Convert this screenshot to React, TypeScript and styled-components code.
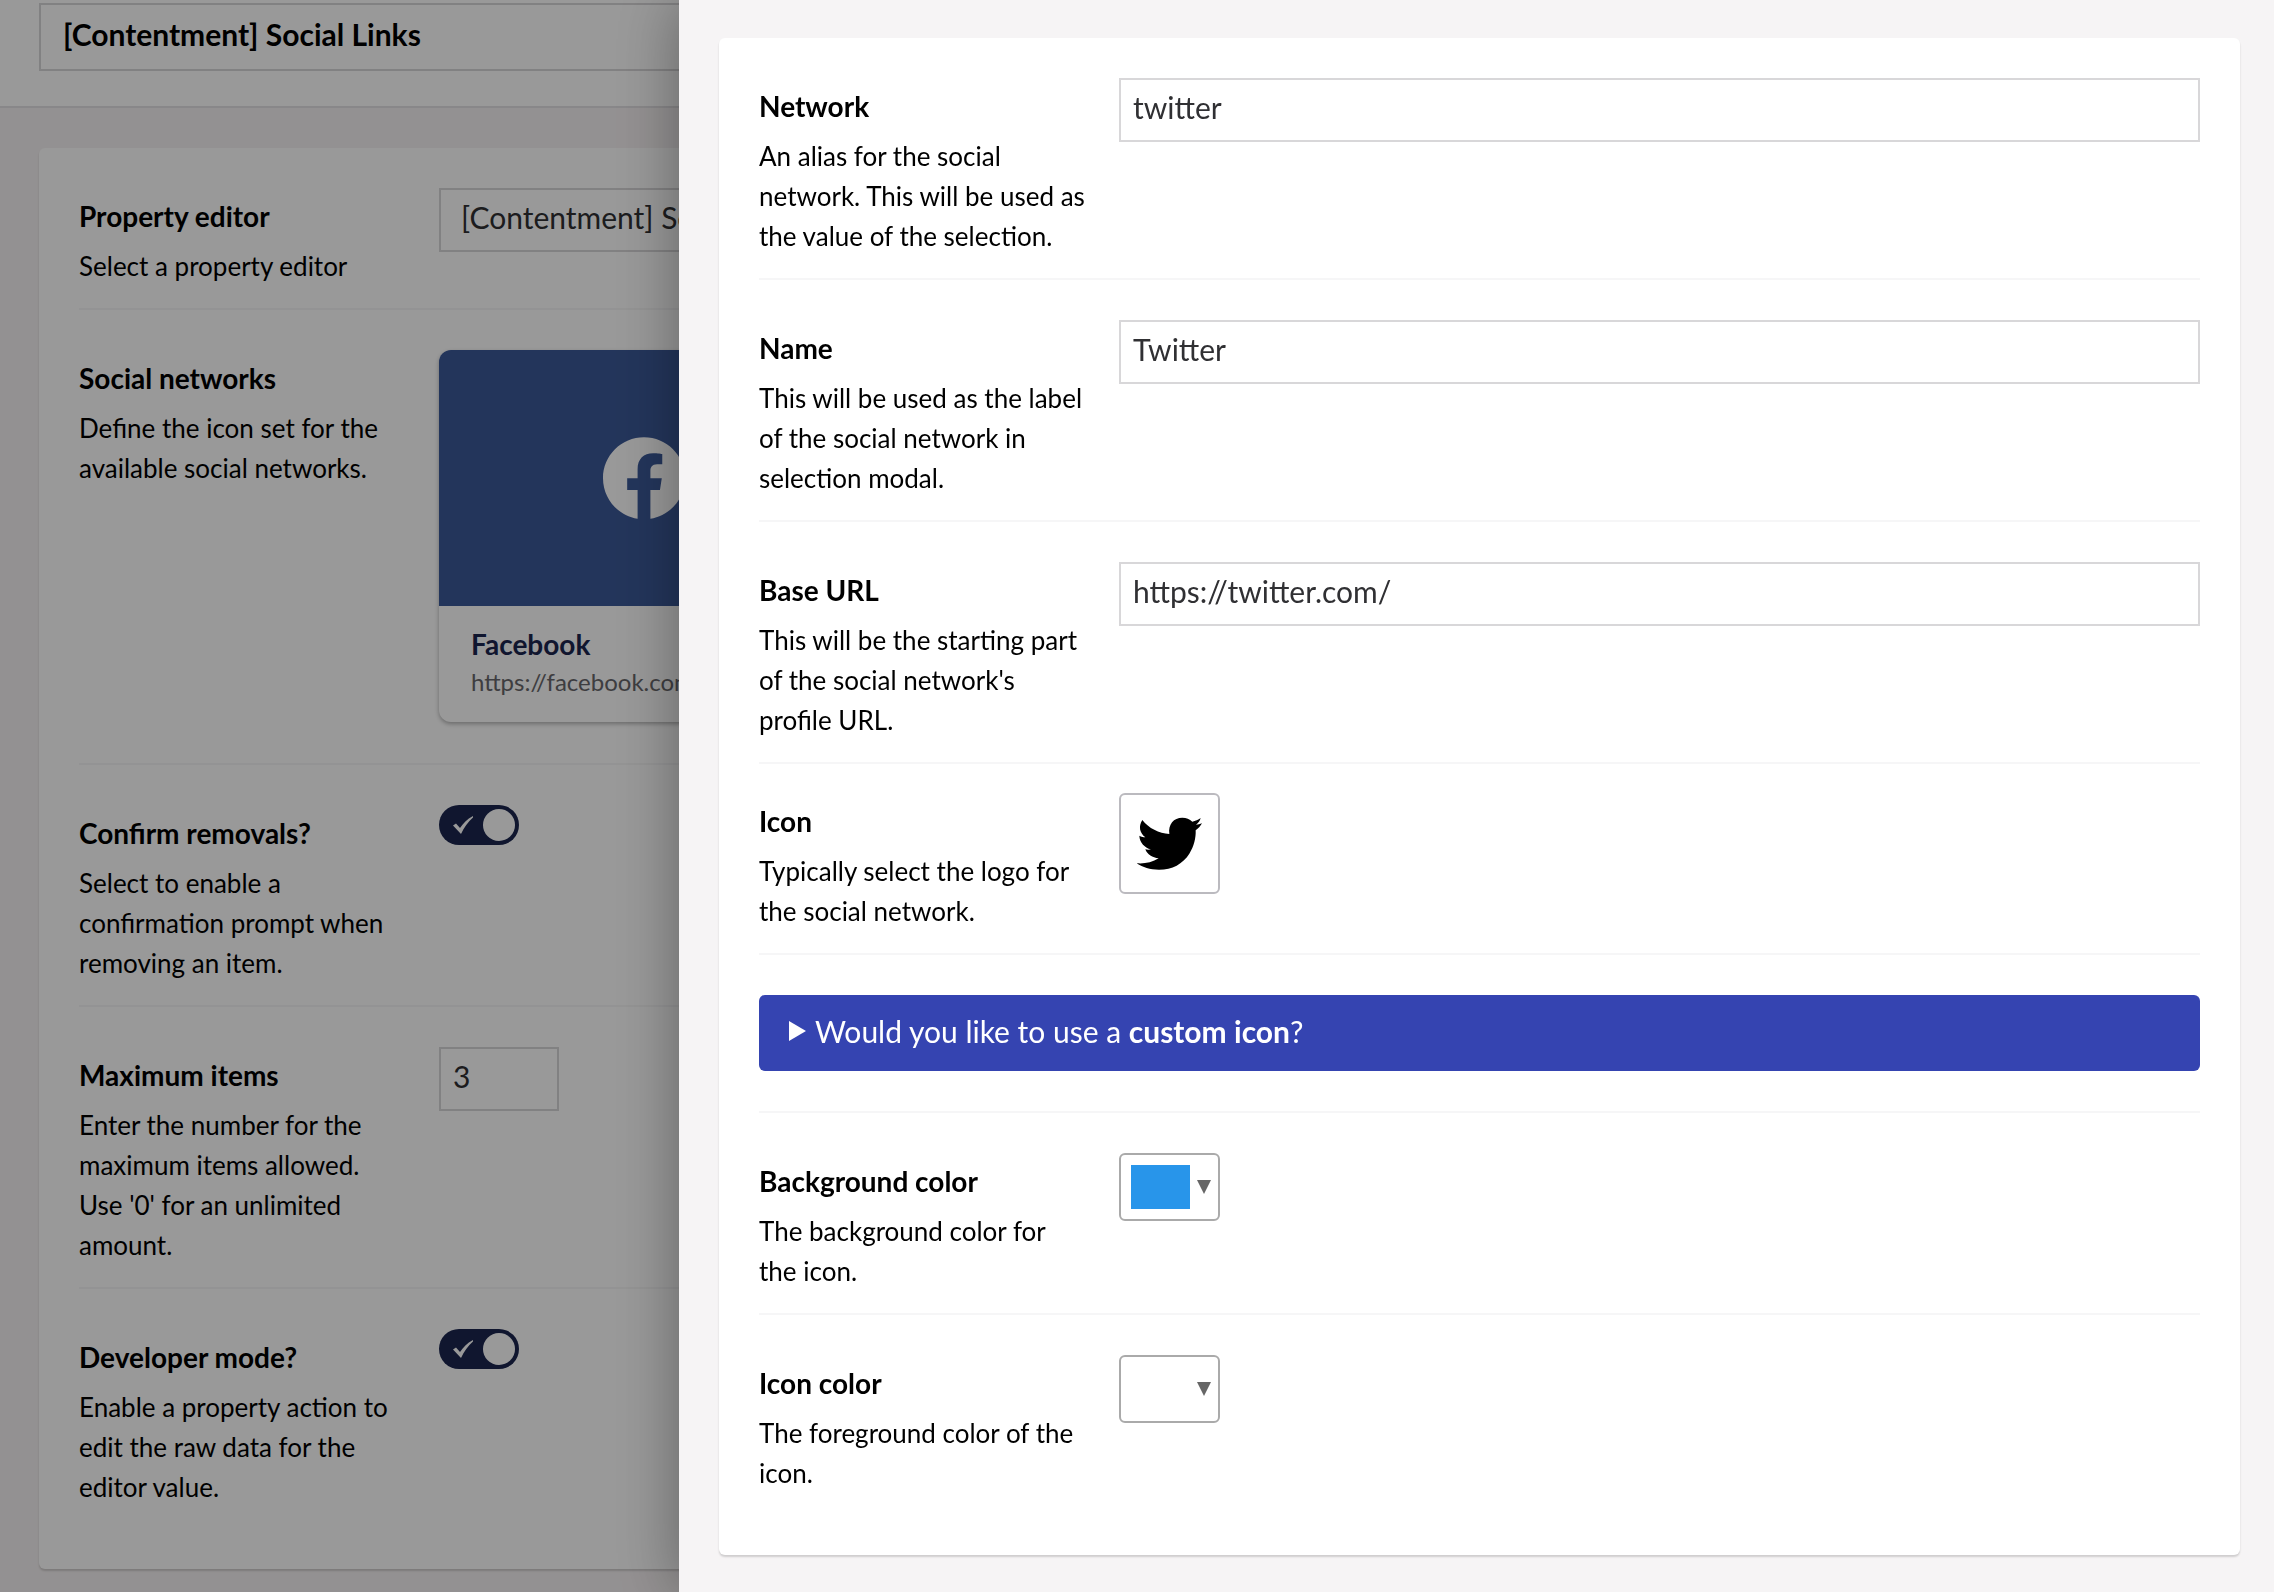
import React, { useId, useState } from 'react';
import styled, { createGlobalStyle } from 'styled-components';

const GlobalStyle = createGlobalStyle`
  *, *::before, *::after { box-sizing: border-box; }
  body {
    margin: 0;
    background: #f6f2f3;
    color: #000;
    font-family: Lato, "Open Sans", sans-serif;
    font-size: 30px;
    line-height: 40px;
  }
  button, input, select { font: inherit; }
`;

/* ---------- page behind the drawer ---------- */

const Page = styled.div`
  display: flex;
  flex-direction: column;
  min-height: 100vh;
  overflow: hidden;
`;

const PageHeader = styled.header`
  padding: 3px 40px 35px 39px;
  background: #fff;
  border-bottom: 2px solid #e3e1e4;
`;

const TitleInput = styled.input`
  display: block;
  width: 100%;
  height: 68px;
  padding: 0 22px 6px;
  border: 2px solid #d8d7d9;
  background: #fff;
  color: #000;
  font-weight: 700;
`;

const PageBody = styled.main`
  padding: 40px 40px 22px 39px;
`;

const Panel = styled.section`
  padding: 40px;
  border-radius: 6px;
  background: #fff;
  box-shadow: 0 2px 2px rgba(0, 0, 0, 0.16);
`;

const Backdrop = styled.div`
  position: fixed;
  inset: 0;
  background: rgba(0, 0, 0, 0.4);
`;

const Drawer = styled.aside`
  position: fixed;
  inset: 0 0 0 679px;
  padding: 38px 34px 38px 40px;
  background: #f6f4f5;
  box-shadow: 0 0 60px rgba(0, 0, 0, 0.36);
`;

/* ---------- property rows ---------- */

const Row = styled.div<{ $tight?: boolean }>`
  display: grid;
  grid-template-columns: 326px minmax(0, 1fr);
  column-gap: 34px;
  align-items: start;
  margin-bottom: ${(p) => (p.$tight ? 29 : 40)}px;
  border-bottom: 2px solid #f6f6f7;

  &:last-child {
    margin-bottom: 0;
    border-bottom: 0;
  }
`;

const FullRow = styled.div`
  margin-bottom: 40px;
  padding-bottom: 40px;
  border-bottom: 2px solid #f6f6f7;
`;

const RowHeader = styled.div`
  padding: 8px 0 22px;
`;

const RowLabel = styled.label`
  display: block;
  margin-bottom: 10px;
  font-size: 28px;
  font-weight: 700;
`;

const Description = styled.p`
  margin: 0;
  font-size: 26px;
`;

const TextInput = styled.input<{ $narrow?: boolean }>`
  display: block;
  width: ${(p) => (p.$narrow ? '120px' : '100%')};
  height: 64px;
  padding: 0 12px 6px;
  border: 2px solid #d8d7d9;
  border-radius: 0;
  background: #fff;
  color: #303033;
`;

const Select = styled.select`
  display: block;
  appearance: none;
  width: 100%;
  height: 64px;
  padding: 0 20px 6px;
  border: 2px solid #d8d7d9;
  border-radius: 0;
  background: #fff;
  color: #303033;
`;

/* ---------- toggle ---------- */

const ToggleBox = styled.span`
  position: relative;
  display: block;
  width: 80px;
  height: 40px;
`;

const ToggleInput = styled.input`
  appearance: none;
  display: flex;
  align-items: center;
  width: 100%;
  height: 100%;
  margin: 0;
  padding: 4px;
  border-radius: 20px;
  background: #bbbabf;

  &::before {
    content: '';
    width: 32px;
    height: 32px;
    border-radius: 50%;
    background: #fff;
  }

  &:checked {
    justify-content: flex-end;
    background: #1b264f;
  }
`;

const ToggleCheck = styled.svg`
  position: absolute;
  top: 11px;
  left: 14px;
  width: 20px;
  height: 18px;
  fill: #fff;
  pointer-events: none;
`;

/* ---------- network card ---------- */

const NetworkCard = styled.article`
  width: 410px;
  margin-bottom: 41px;
  overflow: hidden;
  border-radius: 12px;
  background: #fff;
  box-shadow: 0 2px 4px rgba(0, 0, 0, 0.3);
`;

const CardArt = styled.div`
  display: flex;
  align-items: center;
  justify-content: center;
  height: 256px;
  background: #3b5998;
`;

const CardText = styled.div`
  padding: 18px 32px 22px;
`;

const CardTitle = styled.h3`
  margin: 0;
  color: #1b264f;
  font-size: 28px;
  font-weight: 700;
`;

const CardUrl = styled.p`
  margin: 0;
  color: #68676b;
  font-size: 24px;
  line-height: 36px;
`;

/* ---------- icon and colour pickers ---------- */

const IconButton = styled.button`
  display: block;
  width: 101px;
  height: 101px;
  padding: 0;
  border: 2px solid #bbbabf;
  border-radius: 6px;
  background: #fff;

  svg { display: block; }
`;

const ColorButton = styled.button`
  display: flex;
  align-items: center;
  justify-content: space-between;
  width: 101px;
  height: 68px;
  padding: 0 7px 0 10px;
  border: 2px solid #aaa;
  border-radius: 6px;
  background: #fff;
`;

const Swatch = styled.span<{ $color: string }>`
  width: 59px;
  height: 44px;
  background: ${(p) => p.$color};
`;

const Details = styled.details`
  border-radius: 6px;
  background: #3544b1;
  color: #fff;
`;

const Summary = styled.summary`
  display: flex;
  align-items: center;
  gap: 9px;
  padding: 16px 30px 20px;
`;

/* ---------- drawings ---------- */

const FacebookLogo = () => (
  <svg width="82" height="82" viewBox="0 0 24 24" fill="#fff" aria-hidden="true">
    <path d="M24 12.073c0-6.627-5.373-12-12-12s-12 5.373-12 12c0 5.99 4.388 10.954 10.125 11.854v-8.385H7.078v-3.47h3.047V9.43c0-3.007 1.792-4.669 4.533-4.669 1.312 0 2.686.235 2.686.235v2.953H15.83c-1.491 0-1.956.925-1.956 1.874v2.25h3.328l-.532 3.47h-2.796v8.385C19.612 23.027 24 18.062 24 12.073z" />
  </svg>
);

const TwitterLogo = () => (
  <svg width="97" height="97" viewBox="33 43 291 291" aria-hidden="true">
    <path d="M97 118C116 143 147 158 178 160C174 131 191 111 217 111C229 111 239 115 247 123C256 121 265 117 272 112C270 120 265 127 258 132C264 132 270 130 276 128C271 137 265 143 257 149C258 172 252 197 238 219C218 250 187 267 147 267C119 267 99 260 80 248C102 250 126 246 146 233C127 231 112 222 106 206C112 208 117 208 123 206C103 201 89 185 88 165C94 168 100 170 106 170C90 158 84 138 97 118Z" />
  </svg>
);

const DownArrow = () => (
  <svg width="14" height="14" viewBox="0 0 14 14" fill="#666" aria-hidden="true">
    <path d="M0 0H14L7 14Z" />
  </svg>
);

const RightArrow = () => (
  <svg width="17" height="20" viewBox="0 0 17 20" fill="currentColor" aria-hidden="true">
    <path d="M0 0L17 10L0 20Z" />
  </svg>
);

/* ---------- composed parts ---------- */

type PropertyProps = {
  label: string;
  description: string;
  tight?: boolean;
  children: (id: string) => React.ReactNode;
};

function Property({ label, description, tight, children }: PropertyProps) {
  const id = useId();
  return (
    <Row $tight={tight}>
      <RowHeader>
        <RowLabel htmlFor={id}>{label}</RowLabel>
        <Description>{description}</Description>
      </RowHeader>
      {children(id)}
    </Row>
  );
}

function Toggle({ id }: { id: string }) {
  const [on, setOn] = useState(true);
  return (
    <ToggleBox>
      <ToggleInput id={id} type="checkbox" checked={on} onChange={() => setOn(!on)} />
      {on && (
        <ToggleCheck viewBox="0 0 20 18" aria-hidden="true">
          <path d="M0 9.500L3 7.500L7 12C10 7.500 14 3 20 0L20 1.500C15 6 11 11.500 8 18Z" />
        </ToggleCheck>
      )}
    </ToggleBox>
  );
}

function ColorPicker({ id, color }: { id: string; color: string }) {
  return (
    <ColorButton id={id} type="button">
      <Swatch $color={color} />
      <DownArrow />
    </ColorButton>
  );
}

export default function App() {
  return (
    <>
      <GlobalStyle />
      <Page>
        <PageHeader>
          <TitleInput aria-label="Data type name" defaultValue="[Contentment] Social Links" />
        </PageHeader>
        <PageBody>
          <Panel>
            <Property label="Property editor" description="Select a property editor">
              {(id) => (
                <Select id={id}>
                  <option>[Contentment] Social Links</option>
                </Select>
              )}
            </Property>
            <Property
              label="Social networks"
              description="Define the icon set for the available social networks."
            >
              {(id) => (
                <NetworkCard id={id}>
                  <CardArt>
                    <FacebookLogo />
                  </CardArt>
                  <CardText>
                    <CardTitle>Facebook</CardTitle>
                    <CardUrl>https://facebook.com/</CardUrl>
                  </CardText>
                </NetworkCard>
              )}
            </Property>
            <Property
              label="Confirm removals?"
              description="Select to enable a confirmation prompt when removing an item."
            >
              {(id) => <Toggle id={id} />}
            </Property>
            <Property
              label="Maximum items"
              description="Enter the number for the maximum items allowed. Use '0' for an unlimited amount."
            >
              {(id) => <TextInput id={id} $narrow inputMode="numeric" defaultValue="3" />}
            </Property>
            <Property
              label="Developer mode?"
              description="Enable a property action to edit the raw data for the editor value."
            >
              {(id) => <Toggle id={id} />}
            </Property>
          </Panel>
        </PageBody>
      </Page>

      <Backdrop />

      <Drawer>
        <Panel>
          <Property
            label="Network"
            description="An alias for the social network. This will be used as the value of the selection."
          >
            {(id) => <TextInput id={id} defaultValue="twitter" />}
          </Property>
          <Property
            label="Name"
            description="This will be used as the label of the social network in selection modal."
          >
            {(id) => <TextInput id={id} defaultValue="Twitter" />}
          </Property>
          <Property
            label="Base URL"
            description="This will be the starting part of the social network's profile URL."
            tight
          >
            {(id) => <TextInput id={id} defaultValue="https://twitter.com/" />}
          </Property>
          <Property label="Icon" description="Typically select the logo for the social network.">
            {(id) => (
              <IconButton id={id} type="button">
                <TwitterLogo />
              </IconButton>
            )}
          </Property>
          <FullRow>
            <Details>
              <Summary>
                <RightArrow />
                <span>
                  Would you like to use a <strong>custom icon</strong>?
                </span>
              </Summary>
            </Details>
          </FullRow>
          <Property label="Background color" description="The background color for the icon.">
            {(id) => <ColorPicker id={id} color="#2895ea" />}
          </Property>
          <Property label="Icon color" description="The foreground color of the icon.">
            {(id) => <ColorPicker id={id} color="#ffffff" />}
          </Property>
        </Panel>
      </Drawer>
    </>
  );
}
